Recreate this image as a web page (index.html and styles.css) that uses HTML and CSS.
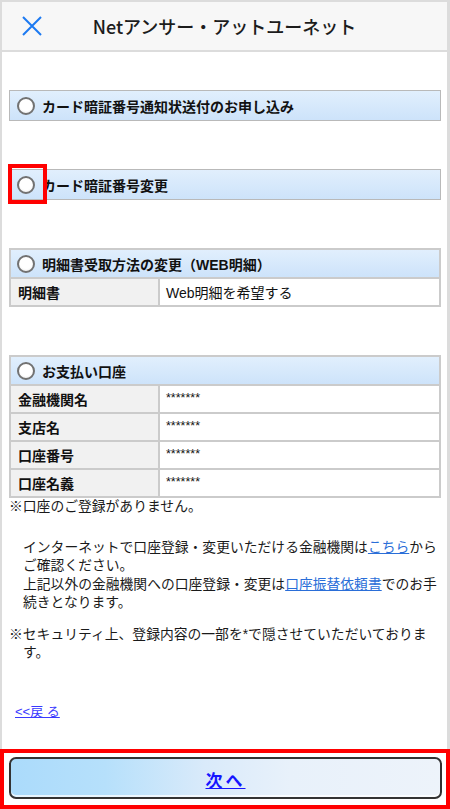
FILE: index.html
```html
<!DOCTYPE html>
<html lang="ja">
<head>
    <meta charset="UTF-8">
    <meta name="viewport" content="width=device-width, initial-scale=1.0">
    <title>Netアンサー・アットユーネット</title>
    <link rel="stylesheet" href="styles.css">
</head>
<body>

    <div class="page">
        <!-- ヘッダー -->
        <header class="top-bar">
            <span class="close-btn">
                <svg width="20" height="20" viewBox="0 0 20 20">
                    <path d="M1 1 L19 19 M19 1 L1 19" stroke="#1c7af2" stroke-width="2" fill="none"/>
                </svg>
            </span>
            <h1 class="title">Netアンサー・アットユーネット</h1>
            <span></span>
        </header>

        <main class="content">
            <div class="sec-box">
                <span class="radio"></span>
                <span>カード暗証番号通知状送付のお申し込み</span>
            </div>

            <div class="sec-box">
                <span class="radio"></span>
                <span>カード暗証番号変更</span>
                <span class="mark"></span>
            </div>

            <div class="sec-table">
                <div class="sec-head">
                    <span class="radio"></span>
                    <span>明細書受取方法の変更（WEB明細）</span>
                </div>
                <div class="row">
                    <div class="label">明細書</div>
                    <div class="value">Web明細を希望する</div>
                </div>
            </div>

            <div class="sec-table last">
                <div class="sec-head">
                    <span class="radio"></span>
                    <span>お支払い口座</span>
                </div>
                <div class="row">
                    <div class="label">金融機関名</div>
                    <div class="value masked">*******</div>
                </div>
                <div class="row">
                    <div class="label">支店名</div>
                    <div class="value masked">*******</div>
                </div>
                <div class="row">
                    <div class="label">口座番号</div>
                    <div class="value masked">*******</div>
                </div>
                <div class="row">
                    <div class="label">口座名義</div>
                    <div class="value masked">*******</div>
                </div>
            </div>

            <p class="note">※口座のご登録がありません。</p>
            <p class="note indent">インターネットで口座登録・変更いただける金融機関は<a href="#">こちら</a>からご確認ください。<br>上記以外の金融機関への口座登録・変更は<a href="#">口座振替依頼書</a>でのお手続きとなります。</p>
            <p class="note hang">※セキュリティ上、登録内容の一部を*で隠させていただいております。</p>

            <a class="back-link" href="#">&lt;&lt;戻 る</a>
        </main>
    </div>

    <!-- 次へボタン -->
    <footer class="footer">
        <a class="next-btn" href="#"><span>次へ</span></a>
    </footer>

</body>
</html>
```

FILE: styles.css
```css
/* 全体 */
body {
    margin: 0;
    height: 809px;
    display: flex;
    flex-direction: column;
    font-family: "Liberation Sans", "Noto Sans CJK JP", sans-serif;
    color: #111;
    background: #fff;
}

.page {
    flex: 1;
    display: flex;
    flex-direction: column;
    min-height: 0;
    border-style: solid;
    border-color: #dcdcdc;
    border-width: 2px 3px 0 2px;
}

/* ヘッダー */
.top-bar {
    height: 48px;
    background: #f7f7f7;
    border-bottom: 2px solid #dcdcdc;
    display: grid;
    grid-template-columns: 60px 1fr 60px;
    align-items: center;
}

.close-btn {
    display: flex;
    padding-left: 20px;
}

.title {
    margin: 0;
    text-align: center;
    font-family: "Noto Sans CJK JP", sans-serif;
    font-size: 18px;
    font-weight: 500;
    color: #1c1c1c;
}

/* 本文 */
.content {
    flex: 1;
    padding: 38px 6px 0 7px;
}

.sec-box {
    position: relative;
    height: 29px;
    border: 1px solid #b9b9b9;
    background: linear-gradient(#e1effd, #cde3fa);
    display: flex;
    align-items: center;
    gap: 7px;
    padding-left: 7px;
    margin-bottom: 48px;
    font-size: 14px;
    font-weight: bold;
}

.radio {
    width: 14px;
    height: 14px;
    border: 2px solid #727272;
    border-radius: 50%;
    background: radial-gradient(circle at 50% 40%, #fff 55%, #e6e6e6);
    flex-shrink: 0;
}

/* 注目枠 */
.mark {
    position: absolute;
    left: -2px;
    top: -6px;
    width: 31px;
    height: 32px;
    border: 4px solid #f00;
}

/* テーブル */
.sec-table {
    border: 2px solid #cbcbcb;
    margin-bottom: 48px;
    font-size: 14px;
}

.sec-table.last {
    margin-bottom: 0;
}

.sec-head {
    height: 27px;
    background: linear-gradient(#e1effd, #cde3fa);
    display: flex;
    align-items: center;
    gap: 7px;
    padding-left: 6px;
    font-weight: bold;
}

.row {
    display: grid;
    grid-template-columns: 149px 1fr;
    height: 26px;
    border-top: 2px solid #cbcbcb;
}

.label {
    background: #f1f1f1;
    border-right: 2px solid #cbcbcb;
    font-weight: bold;
    padding-left: 7px;
    display: flex;
    align-items: center;
}

.value {
    padding-left: 6px;
    display: flex;
    align-items: center;
    font-size: 14px;
}

.value.masked {
    font-size: 12.5px;
    align-items: flex-start;
    padding-top: 5px;
}

/* 注記 */
.note {
    margin: 0;
    font-size: 13.8px;
    line-height: 18.5px;
    color: #1a1a1a;
}

.note.indent {
    margin-top: 22px;
    padding-left: 14px;
}

.note.hang {
    margin-top: 13px;
    padding-left: 14px;
    text-indent: -14px;
}

.note a {
    color: #2a6ed8;
}

.back-link {
    display: inline-block;
    margin: 41px 0 0 6px;
    font-size: 13px;
    line-height: 16px;
    color: #3a3aff;
}

/* フッター */
.footer {
    height: 60px;
    box-sizing: border-box;
    border: 4px solid #f00;
    padding: 4px 4px 6px 5px;
    display: flex;
}

.next-btn {
    flex: 1;
    border: 2px solid #333;
    border-radius: 7px;
    background: linear-gradient(90deg, #abdbfb 0%, #b6e0fb 22%, #d9eafa 45%, #e8f1fa 65%, #edf3fa 100%);
    box-shadow: inset 0 -2px 0 rgba(255, 255, 255, 0.7);
    display: flex;
    justify-content: center;
    align-items: center;
    color: #1515ff;
    font-size: 17px;
    font-weight: bold;
    letter-spacing: 3px;
    padding-top: 2px;
}
```
